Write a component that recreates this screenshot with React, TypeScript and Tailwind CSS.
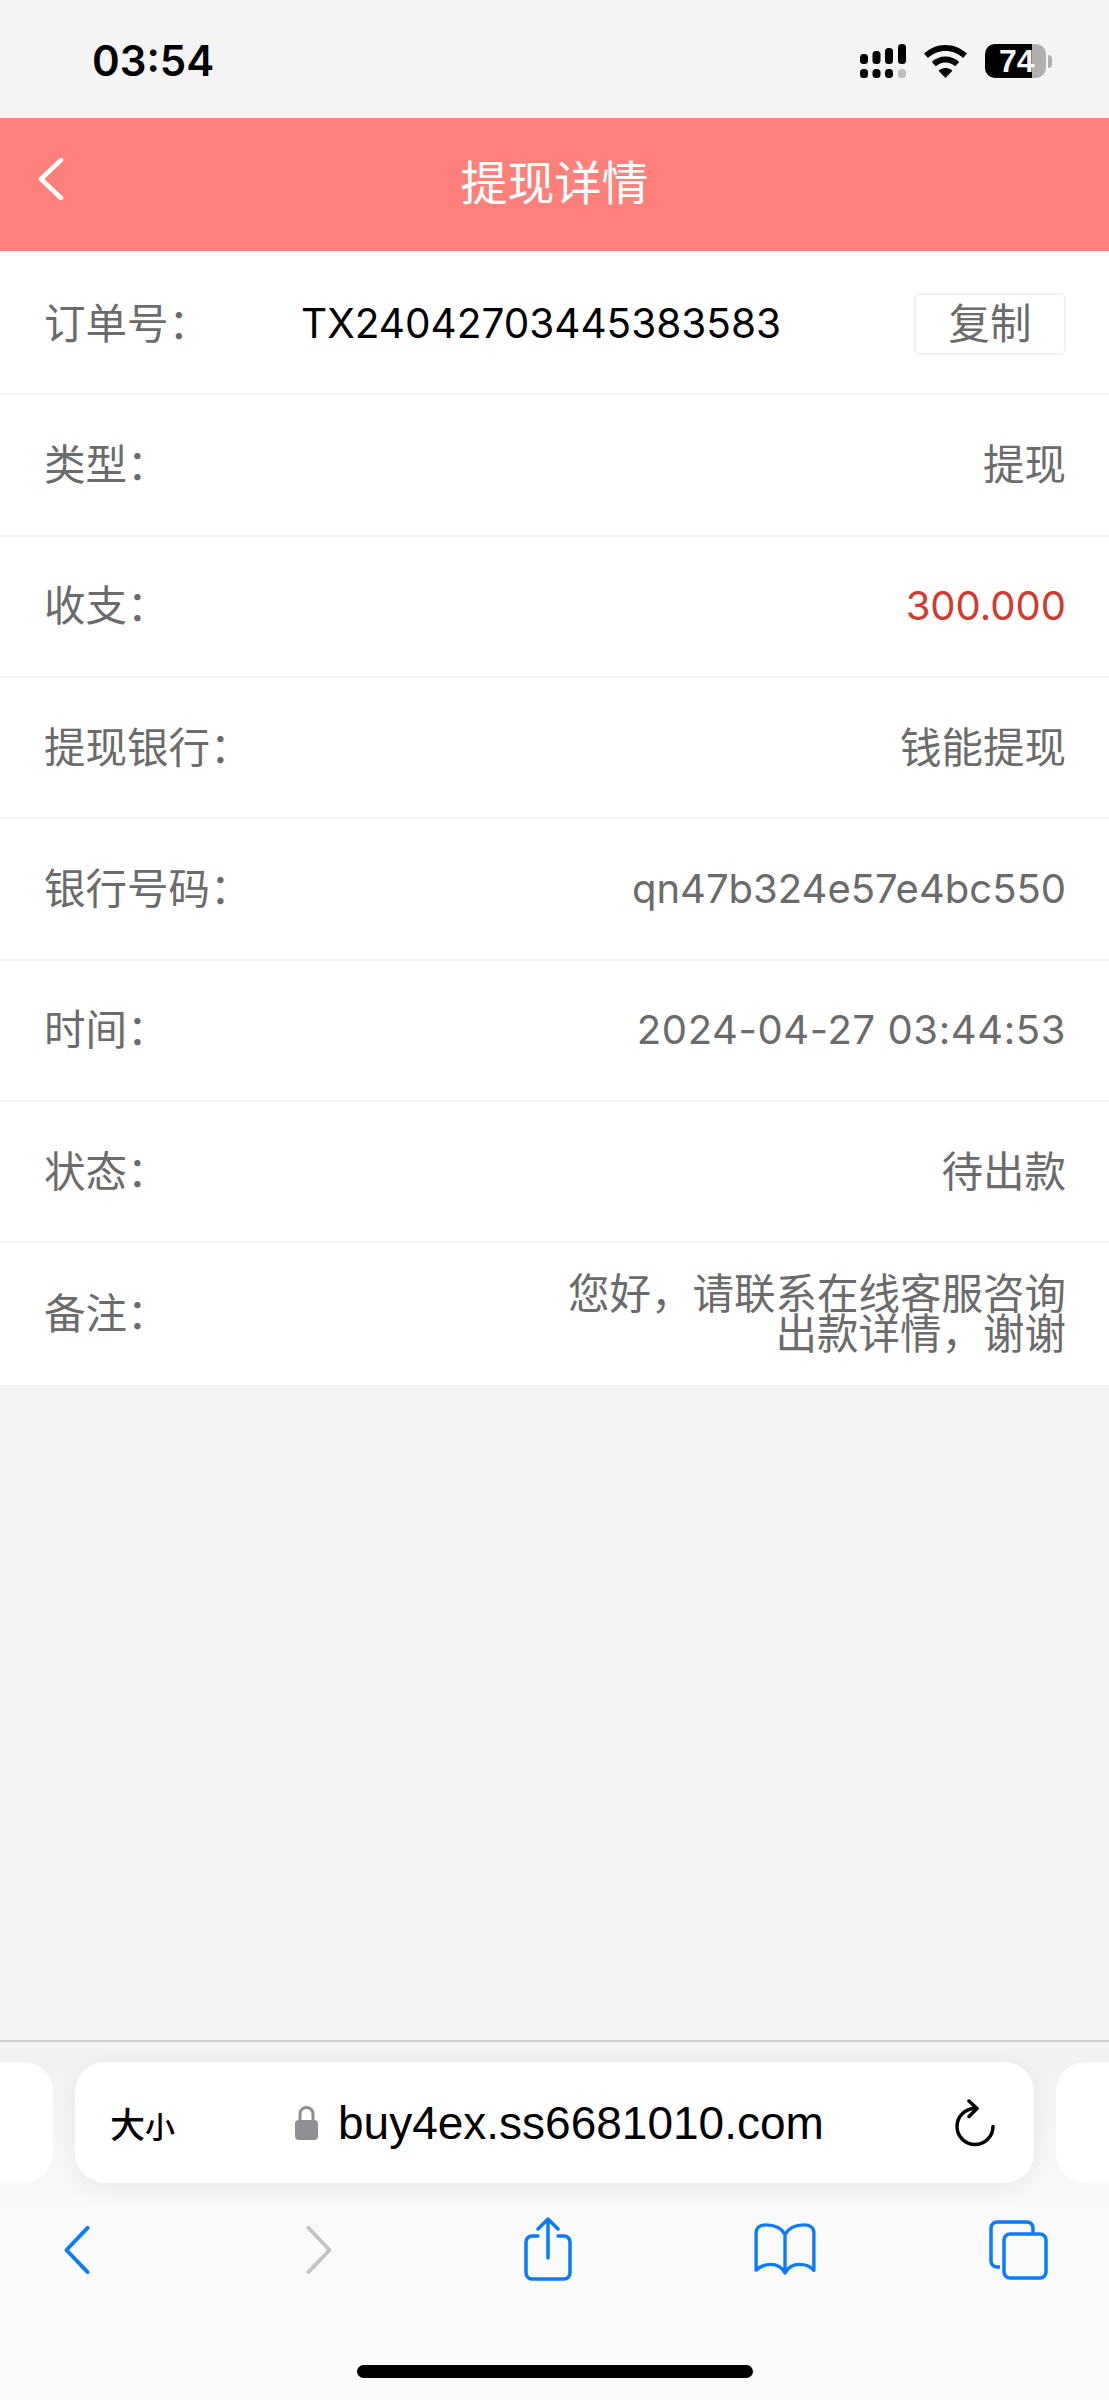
const cjk = "font-['Inter','Noto_Sans_CJK_SC',sans-serif]";

// full-width punctuation written as escapes so it stays U+FF1A / U+FF0C
const colon = "\uFF1A";
const comma = "\uFF0C";

const rows = [
  { label: "类型" + colon, value: "提现" },
  { label: "收支" + colon, value: "300.000", color: "text-[#d13b2e] text-[40px]" },
  { label: "提现银行" + colon, value: "钱能提现" },
  { label: "银行号码" + colon, value: "qn47b324e57e4bc550", color: "text-[#6b6b6b] text-[40px]" },
  { label: "时间" + colon, value: "2024-04-27 03:44:53", color: "text-[#6b6b6b] text-[40px] tracking-[0.6px]" },
  { label: "状态" + colon, value: "待出款" },
];

function StatusIcons() {
  return (
    <div className="flex items-center gap-[18px]">
      <svg width="46" height="34" viewBox="0 0 46 34" fill="#000">
        <rect x="0" y="10" width="8" height="10" rx="3.5" />
        <rect x="12.5" y="7" width="8" height="13" rx="3.5" />
        <rect x="25" y="4" width="8" height="16" rx="3.5" />
        <rect x="38" y="0" width="8" height="20" rx="3.5" />
        <rect x="0" y="25" width="8" height="9" rx="3.5" />
        <rect x="12.5" y="25" width="8" height="9" rx="3.5" />
        <rect x="25" y="25" width="8" height="9" rx="3.5" />
        <rect x="38" y="25" width="8" height="9" rx="3.5" fill="#bdbdbd" />
      </svg>
      <svg width="43" height="33" viewBox="0 0 43 33" fill="#000">
        <path d="M21.5 0C13.2 0 6 3.2 0 8.6l4 4.3C8.900 8.500 15 6 21.500 6S34.100 8.500 39 12.900l4-4.300C37 3.200 29.800 0 21.500 0Z" />
        <path d="M21.500 11.500c-5.300 0-9.900 2-13.700 5.400l4 4.300c2.700-2.400 6-3.800 9.700-3.800s7 1.400 9.700 3.800l4-4.300c-3.800-3.400-8.400-5.400-13.700-5.400Z" />
        <path d="M21.500 23c-2.700 0-5 1-6.900 2.700L21.500 33l6.900-7.300C26.500 24 24.200 23 21.500 23Z" />
      </svg>
      <div className="flex items-center">
        <div className="relative flex h-[34px] w-[61px] items-center overflow-hidden rounded-[10px] bg-[#b0b0b0] pl-[14px]">
          <div className="absolute inset-y-0 left-0 w-[47px] bg-black" />
          <span className="relative font-['Liberation_Sans',sans-serif] text-[32px] leading-none font-bold text-[#f4f4f4]">74</span>
        </div>
        <div className="ml-[2px] h-[13px] w-[4px] rounded-r-full bg-[#b0b0b0]" />
      </div>
    </div>
  );
}

function Row({ label, children, last }: { label: string; children: React.ReactNode; last?: boolean }) {
  return (
    <div className={`flex h-[141.330px] items-center justify-between pr-[43px] pl-[44px] ${last ? "" : "border-b-2 border-[#f3f3f3]"}`}>
      <span className="shrink-0 text-[#6b6b6b]">{label}</span>
      {children}
    </div>
  );
}

function BottomBar() {
  return (
    <div className="flex h-[360px] shrink-0 flex-col border-t-2 border-[#cfcfcf] bg-[linear-gradient(#f1f1f1,#fafafa_55%,#fafafa)]">
      <div className="flex justify-center gap-[22px] overflow-hidden pt-[20px] pb-[34px]">
        <div className="h-[121px] w-[100px] shrink-0 rounded-[30px] bg-white" />
        <div className="flex h-[121px] w-[959px] shrink-0 items-center rounded-[30px] bg-white pr-[38px] pl-[35px] shadow-[0_6px_24px_rgba(0,0,0,0.06)]">
          <div className="flex w-[104px] items-baseline font-['Noto_Sans_CJK_SC',sans-serif] font-medium text-black">
            <span className="text-[35px] leading-none">大</span>
            <span className="text-[30px] leading-none">小</span>
          </div>
          <div className="flex flex-1 items-center pl-[80px]">
            <svg width="25" height="36" viewBox="0 0 25 36" className="mr-[19px]">
              <path d="M6 16V9a6.500 6.500 0 0 1 13 0v7" fill="none" stroke="#8e8e93" strokeWidth="3" />
              <rect x="1" y="15" width="23" height="20" rx="4" fill="#8e8e93" />
            </svg>
            <span className="font-['Liberation_Sans',sans-serif] text-[46px] leading-none text-black">buy4ex.ss6681010.com</span>
          </div>
          <svg width="42" height="48" viewBox="0 0 42 48" fill="none" stroke="#000" strokeWidth="3.500" strokeLinecap="round" strokeLinejoin="round">
            <path d="M21 9.500a18 18 0 1 0 18 18" />
            <path d="M15 2l8 7.500-8 8" />
          </svg>
        </div>
        <div className="h-[121px] w-[100px] shrink-0 rounded-[30px] bg-white" />
      </div>
      <div className="flex items-start pl-[63px]">
        <svg width="28" height="48" viewBox="0 0 28 50" fill="none" stroke="#0a7aff" strokeWidth="4" strokeLinecap="round" strokeLinejoin="round" className="mt-[9px]">
          <path d="M25 2L3 25l22 23" />
        </svg>
        <svg width="28" height="48" viewBox="0 0 28 50" fill="none" stroke="#c4c4c6" strokeWidth="4" strokeLinecap="round" strokeLinejoin="round" className="mt-[9px] ml-[214px]">
          <path d="M3 2l22 23L3 48" />
        </svg>
        <svg width="50" height="64" viewBox="0 0 50 64" fill="none" stroke="#0a7aff" strokeWidth="3.500" strokeLinecap="round" strokeLinejoin="round" className="ml-[190px]">
          <path d="M15 19H9a6 6 0 0 0-6 6v31a6 6 0 0 0 6 6h32a6 6 0 0 0 6-6V25a6 6 0 0 0-6-6h-6" />
          <path d="M25 41V2M15 12L25 2l10 10" />
        </svg>
        <svg width="64" height="52" viewBox="0 0 64 54" fill="none" stroke="#0a7aff" strokeWidth="3.500" strokeLinecap="round" strokeLinejoin="round" className="mt-[6px] ml-[180px]">
          <path d="M32 12C28 4 20 2 12 2 6 2 2 5 2 10v39c5-5 10-6 15-6 7 0 12 3 15 9 3-6 8-9 15-9 5 0 10 1 15 6V10c0-5-4-8-10-8-8 0-16 2-20 10v40" />
        </svg>
        <svg width="61" height="60" viewBox="0 0 59 60" fill="none" stroke="#0a7aff" strokeWidth="3.500" strokeLinejoin="round" className="mt-[3px] ml-[171px]">
          <path d="M11 47H8a6 6 0 0 1-6-6V8a6 6 0 0 1 6-6h30a6 6 0 0 1 6 6v5" />
          <rect x="15" y="14" width="42" height="44" rx="6" />
        </svg>
      </div>
      <div className="mt-auto mb-[22px] h-[13px] w-[396px] self-center rounded-full bg-black" />
    </div>
  );
}

export default function App() {
  return (
    <div className={`flex h-[2400px] w-[1109px] flex-col bg-[#f4f4f4] text-[41.5px] leading-[40px] ${cjk}`}>
      <div className="flex h-[118px] shrink-0 items-center justify-between pt-[4px] pr-[57px] pl-[92px]">
        <span className="font-['Inter',sans-serif] text-[42px] leading-none font-semibold text-black">03:54</span>
        <StatusIcons />
      </div>

      <div className="relative flex h-[133px] shrink-0 items-center justify-center bg-[#ff807a] pb-[4px] text-white">
        <svg width="26" height="42" viewBox="0 0 26 42" fill="none" stroke="#fff" strokeWidth="4.500" strokeLinecap="round" strokeLinejoin="round" className="absolute top-[40px] left-[38px]">
          <path d="M23 2L3 21l20 19" />
        </svg>
        <span className="text-[47px] leading-none">提现详情</span>
      </div>

      <div className="shrink-0 bg-white pt-[3px]">
        <Row label={"订单号" + colon}>
          <span className="flex-1 pl-[91px] text-[40.5px] text-black">TX24042703445383583</span>
          <button className="flex h-[62px] w-[152px] shrink-0 items-center justify-center rounded-[6px] border-2 border-[#f0f0f0] text-[#6b6b6b]">复制</button>
        </Row>
        {rows.map((r) => (
          <Row key={r.label} label={r.label}>
            <span className={r.color ?? "text-[#6b6b6b]"}>{r.value}</span>
          </Row>
        ))}
        <Row label={"备注" + colon} last>
          <span className="text-right text-[#6b6b6b]">
            {"您好" + comma + "请联系在线客服咨询"}
            <br />
            {"出款详情" + comma + "谢谢"}
          </span>
        </Row>
      </div>

      <div className="flex-1" />
      <BottomBar />
    </div>
  );
}
